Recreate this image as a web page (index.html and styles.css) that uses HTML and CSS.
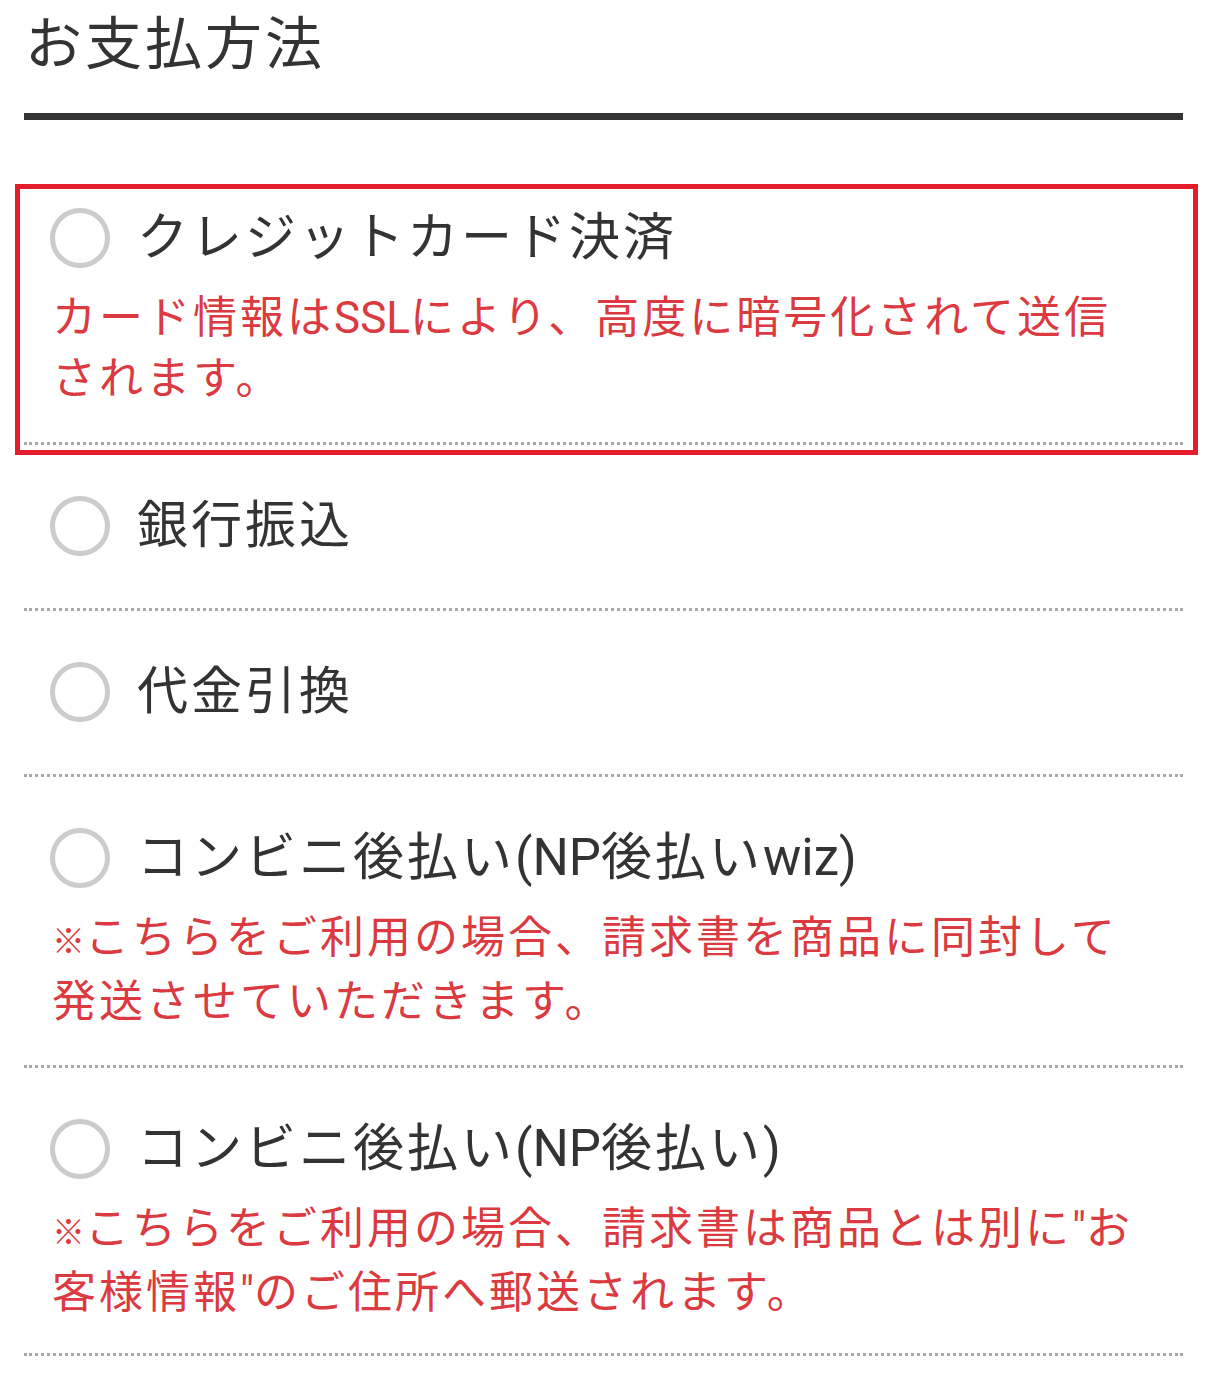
FILE: index.html
```html
<!DOCTYPE html>
<html lang="ja">
<head>
<meta charset="utf-8">
<link rel="stylesheet" href="styles.css">
</head>
<body>
<div class="page">
  <h2 class="title">お支払方法</h2>
  <ul class="methods">
    <li class="method method-highlight">
      <div class="label"><span class="radio"></span><span class="label-text">クレジットカード決済</span></div>
      <p class="desc">カード情報は<span class="latin">SSL</span>により、高度に暗号化されて送信<br>されます。</p>
      <span class="annotation"></span>
    </li>
    <li class="method">
      <div class="label"><span class="radio"></span><span class="label-text">銀行振込</span></div>
    </li>
    <li class="method">
      <div class="label"><span class="radio"></span><span class="label-text">代金引換</span></div>
    </li>
    <li class="method">
      <div class="label"><span class="radio"></span><span class="label-text">コンビニ後払い<span class="latin">(NP</span>後払い<span class="latin">wiz)</span></span></div>
      <p class="desc"><span class="mark">※</span>こちらをご利用の場合、請求書を商品に同封して<br>発送させていただきます。</p>
    </li>
    <li class="method">
      <div class="label"><span class="radio"></span><span class="label-text">コンビニ後払い<span class="latin">(NP</span>後払い<span class="latin">)</span></span></div>
      <p class="desc"><span class="mark">※</span>こちらをご利用の場合、請求書は商品とは別に<span class="latin">"</span>お<br>客様情報<span class="latin">"</span>のご住所へ郵送されます。</p>
    </li>
  </ul>
</div>
</body>
</html>
```

FILE: styles.css
```css
html, body {
  margin: 0;
  padding: 0;
  background: #ffffff;
}
body {
  font-family: Roboto, "Noto Sans CJK JP", "Noto Sans", sans-serif;
  color: #333333;
}
.page {
  padding: 0 25px 0 24px;
}
.title {
  margin: 0;
  padding: 10px 0 33px 1px;
  font-size: 57px;
  line-height: 70px;
  font-weight: 400;
  letter-spacing: 3px;
  color: #333333;
  border-bottom: 7px solid #333333;
}
.methods {
  list-style: none;
  margin: 37px 0 0;
  padding: 0;
}
.method {
  position: relative;
  padding: 53px 0 32px 1px;
  border-bottom: 3px dotted #a8a8a8;
}
.method:last-child {
  padding-bottom: 29px;
}
.label {
  display: flex;
  align-items: center;
  gap: 27px;
  height: 56px;
  padding-left: 25px;
  padding-bottom: 22px;
}
.radio {
  flex: none;
  width: 60px;
  height: 60px;
  box-sizing: border-box;
  border: 5px solid #cccccc;
  border-radius: 50%;
}
.label-text {
  font-size: 51px;
  line-height: 56px;
  letter-spacing: 3px;
  color: #333333;
}
.latin {
  letter-spacing: 0;
}
.desc {
  margin: 0;
  padding-left: 27px;
  font-size: 44px;
  line-height: 61px;
  letter-spacing: 3px;
  color: #da3a40;
}
.mark {
  font-size: 33px;
  letter-spacing: 0;
}
.annotation {
  position: absolute;
  top: 27px;
  left: -9px;
  right: -15px;
  bottom: -13px;
  border: 5px solid #e31e2a;
  pointer-events: none;
}
```
